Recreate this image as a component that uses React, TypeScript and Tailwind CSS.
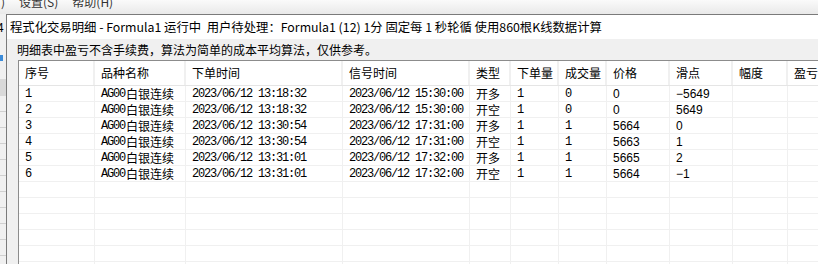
import React from 'react';

const cols = [76, 91, 157, 127, 41, 48, 48, 63, 63, 55, 60];
const headers = ['序号', '品种名称', '下单时间', '信号时间', '类型', '下单量', '成交量', '价格', '滑点', '幅度', '盈亏'];

const rows = [
  ['1', '2023/06/12 13:18:32', '2023/06/12 15:30:00', '开多', '1', '0', '0', '−5649'],
  ['2', '2023/06/12 13:18:32', '2023/06/12 15:30:00', '开空', '1', '0', '0', '5649'],
  ['3', '2023/06/12 13:30:54', '2023/06/12 17:31:00', '开多', '1', '1', '5664', '0'],
  ['4', '2023/06/12 13:30:54', '2023/06/12 17:31:00', '开空', '1', '1', '5663', '1'],
  ['5', '2023/06/12 13:31:01', '2023/06/12 17:32:00', '开多', '1', '1', '5665', '2'],
  ['6', '2023/06/12 13:31:01', '2023/06/12 17:32:00', '开空', '1', '1', '5664', '−1'],
];

const sans = "font-['Noto_Sans_CJK_SC','Noto_Sans',sans-serif]";
const mono = "font-['Liberation_Mono','Noto_Sans_CJK_SC',monospace] tracking-[-1.2px]";

function Cell({ w, children, className = '' }: { w: number; children?: React.ReactNode; className?: string }) {
  return (
    <div
      style={{ width: w }}
      className={`shrink-0 h-full border-r border-[#f0f0f0] pl-[6px] flex items-center whitespace-nowrap overflow-hidden ${className}`}
    >
      {children}
    </div>
  );
}

export default function App() {
  const empty = Array.from({ length: 6 });
  return (
    <div className={`w-[818px] h-[264px] overflow-hidden bg-[#f0f0f0] text-black ${sans}`}>
      {/* menu bar of the window behind */}
      <div className="h-[14px] bg-gradient-to-b from-[#fafafa] to-[#e9e9e9] overflow-hidden">
        <div className="flex gap-[14px] -mt-[4px] pl-[1px] text-[12px] leading-[12px] text-[#333]">
          <span>)</span>
          <span>设置(S)</span>
          <span>帮助(H)</span>
        </div>
      </div>

      <div className="flex h-[250px]">
        {/* strip of the window behind */}
        <div className="w-[6px] shrink-0 bg-[#f0f0f0] flex flex-col overflow-hidden">
          <div className="h-[6px]" />
          <div className="text-[12px] leading-[14px] -ml-[3px] text-black">4</div>
          <div className="h-[21px]" />
          <div className="h-[6px] bg-[#3b8bd9] w-[3px]" />
          <div className="h-[18px]" />
          <div className="h-[17px] bg-[#d9d9d9]" />
          {Array.from({ length: 10 }).map((_, i) => (
            <div key={i} className="h-[16px] border-b border-[#d0d0d0]" />
          ))}
        </div>

        {/* detail window */}
        <div className="flex-1 border-l border-t border-[#7a7a7a] flex flex-col min-w-0">
          <div className="h-[24px] bg-white flex items-center pl-[3px] text-[12.35px] whitespace-nowrap">
            程式化交易明细 - Formula1 运行中&nbsp;&nbsp;用户待处理：Formula1 (12) 1分 固定每 1 秒轮循 使用860根K线数据计算
          </div>
          <div className="h-[21px] flex items-center pl-[10px] text-[12px] whitespace-nowrap">
            明细表中盈亏不含手续费，算法为简单的成本平均算法，仅供参考。
          </div>
          <div className="ml-[11px] flex-1 bg-white border-l border-t border-[#8c8c8c] overflow-hidden">
            <div className="flex h-[25px] border-b border-[#e5e5e5] text-[12px]">
              {headers.map((h, i) => (
                <Cell key={h} w={cols[i]} className="border-r-2 border-[#e3e3e3]">
                  {h}
                </Cell>
              ))}
            </div>
            {rows.map((r) => (
              <div key={r[0]} className="flex h-[16px] border-b border-[#f0f0f0] text-[12px] leading-none">
                <Cell w={cols[0]} className={mono}>{r[0]}</Cell>
                <Cell w={cols[1]}>
                  <span className={`${mono} mr-[1px]`}>AG00</span>
                  <span>白银连续</span>
                </Cell>
                <Cell w={cols[2]} className={mono}>{r[1]}</Cell>
                <Cell w={cols[3]} className={mono}>{r[2]}</Cell>
                <Cell w={cols[4]}>{r[3]}</Cell>
                <Cell w={cols[5]} className={mono}>{r[4]}</Cell>
                <Cell w={cols[6]} className={mono}>{r[5]}</Cell>
                <Cell w={cols[7]} className="font-['Liberation_Sans',sans-serif]">{r[6]}</Cell>
                <Cell w={cols[8]} className="font-['Liberation_Sans',sans-serif]">{r[7]}</Cell>
                <Cell w={cols[9]} />
                <Cell w={cols[10]} />
              </div>
            ))}
            {empty.map((_, i) => (
              <div key={i} className="flex h-[16px] border-b border-[#f0f0f0]">
                {cols.map((w, j) => (
                  <Cell key={j} w={w} />
                ))}
              </div>
            ))}
          </div>
        </div>
      </div>
    </div>
  );
}
